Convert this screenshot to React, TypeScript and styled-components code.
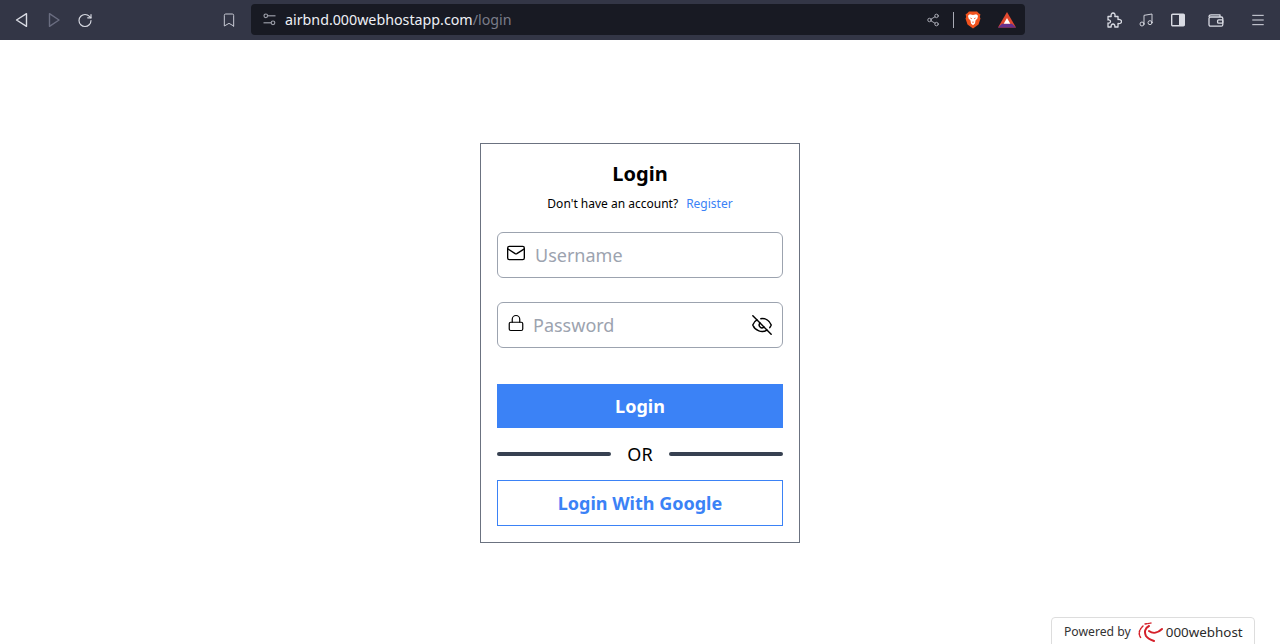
import * as React from 'react';
import styled, { createGlobalStyle } from 'styled-components';
import { Bookmark, EyeOff, Lock, Mail, Menu, Music, RotateCw, Share2 } from 'lucide-react';

const GlobalStyle = createGlobalStyle`
  html, body {
    margin: 0;
    height: 100%;
    overflow: hidden;
    background: #ffffff;
    font-family: 'Noto Sans', 'Open Sans', sans-serif;
  }
`;
const Page = styled.div`
  display: flex;
  flex-direction: column;
  height: 644px;
`;
const Toolbar = styled.header`
  display: flex;
  align-items: center;
  height: 40px;
  flex-shrink: 0;
  background-color: #333646;
  color: #d9dbe3;
`;
const NavGroup = styled.div`
  display: flex;
  align-items: center;
  width: 220px;
  padding-left: 13px;
  gap: 16px;
  box-sizing: border-box;
`;
const ToolButton = styled.span<{ $dim?: boolean }>`
  display: flex;
  align-items: center;
  justify-content: center;
  width: 16px;
  height: 16px;
  color: ${(p) => (p.$dim ? '#6a6d80' : '#d9dbe3')};
`;
const BookmarkSlot = styled.span`
  display: flex;
  width: 31px;
  padding-left: 1px;
  box-sizing: border-box;
  color: #c6c8d2;
`;
const AddressBar = styled.div`
  display: flex;
  align-items: center;
  width: 774px;
  height: 31px;
  margin-top: -1px;
  padding: 0 9px 0 12px;
  box-sizing: border-box;
  background-color: #181a23;
  border-radius: 4px;
`;
const Url = styled.div`
  flex: 1;
  margin: -1px 0 0 9px;
  font-size: 14.25px;
  color: #eef0f6;
`;
const UrlPath = styled.span`
  color: #7a7c88;
`;
const ShareSlot = styled.span`
  display: flex;
  margin-right: 3px;
`;
const Divider = styled.span`
  width: 1px;
  height: 16px;
  margin: 0 11px 0 10px;
  background-color: #a9abb5;
`;
const BraveGap = styled.span`
  width: 17px;
`;
const RightTools = styled.div`
  display: flex;
  align-items: center;
  margin-left: 81px;
  color: #d9dbe3;
`;
const RightSlot = styled.span<{ $gap: number }>`
  display: flex;
  justify-content: center;
  width: 16px;
  margin-right: ${(p) => p.$gap}px;
`;
const Main = styled.main`
  flex: 1;
  display: flex;
  justify-content: center;
  padding-top: 103px;
`;
const Card = styled.form`
  display: flex;
  flex-direction: column;
  width: 320px;
  height: 400px;
  padding: 16px;
  box-sizing: border-box;
  border: 1px solid #6b7280;
`;
const Title = styled.h1`
  margin: 0;
  height: 28px;
  font-size: 20px;
  line-height: 28px;
  font-weight: 700;
  text-align: center;
  color: #000000;
`;
const SubTitle = styled.p`
  margin: 8px 0 20px;
  height: 16px;
  font-size: 12px;
  line-height: 16px;
  text-align: center;
  color: #000000;
`;
const RegisterLink = styled.a`
  margin-left: 8px;
  color: #3b82f6;
`;
const Field = styled.div<{ $offset: number }>`
  display: flex;
  align-items: center;
  height: 46px;
  margin-bottom: 24px;
  padding: 0 9px 0 ${(p) => p.$offset}px;
  box-sizing: border-box;
  border: 1px solid #9ca3af;
  border-radius: 6px;
  color: #000000;
`;
const FieldIcon = styled.span<{ $gap: number }>`
  display: flex;
  margin: -5px ${(p) => p.$gap}px 0 0;
`;
const Placeholder = styled.span`
  flex: 1;
  font-size: 18px;
  color: #9ca3af;
`;
const PrimaryButton = styled.button`
  height: 44px;
  margin-top: 12px;
  padding: 0;
  border: none;
  background-color: #3b82f6;
  color: #ffffff;
  font-family: inherit;
  font-size: 18px;
  font-weight: 700;
`;
const OrRow = styled.div`
  display: flex;
  align-items: center;
  justify-content: space-between;
  height: 52px;
  font-size: 18px;
  color: #000000;
`;
const OrLine = styled.span`
  width: 114px;
  height: 4px;
  border-radius: 2px;
  background-color: #374151;
`;
const GoogleButton = styled.button`
  height: 46px;
  padding: 0;
  border: 1px solid #3b82f6;
  background-color: #ffffff;
  color: #3b82f6;
  font-family: inherit;
  font-size: 18px;
  font-weight: 700;
`;
const Badge = styled.div`
  position: fixed;
  right: 25px;
  bottom: -2px;
  display: flex;
  align-items: center;
  width: 204px;
  height: 29px;
  padding-left: 12px;
  box-sizing: border-box;
  background: #ffffff;
  border: 1px solid #dddddd;
  border-radius: 4px 4px 0 0;
  font-size: 12.2px;
  color: #333333;
`;
const BadgeLogo = styled.span`
  display: flex;
  margin: 0 3px 0 6px;
`;
const BadgeBrand = styled.span`
  font-size: 13.4px;
  color: #2b2b2b;
`;

const BackIcon = ({ flip }: { flip?: boolean }) => (
  <svg width="16" height="16" viewBox="0 0 16 16" fill="none" stroke="currentColor" strokeWidth="1.4" strokeLinejoin="round">
    <path d={flip ? 'M4.5 1.7 L14 8 L4.5 14.3 Z' : 'M13.5 1.7 L3.5 8 L13.5 14.3 Z'} />
  </svg>
);
const SiteSettingsIcon = () => (
  <svg width="13" height="13" viewBox="0 0 13 13" fill="none" stroke="#9a9ca6" strokeWidth="1.2">
    <circle cx="2.8" cy="2.8" r="1.8" />
    <path d="M4.8 2.8 H12.5" />
    <circle cx="10" cy="9.8" r="1.8" />
    <path d="M0.5 9.8 H8" />
  </svg>
);
const PuzzleIcon = () => (
  <svg width="16" height="16" viewBox="0 0 16 16" fill="none" stroke="currentColor" strokeWidth="1.3" strokeLinejoin="round">
    <path d="M2 4.5 H5.2 C4.6 2 6 1 7 1 C8.5 1 9.5 2.3 8.8 4.5 H12 V7.5 C14.5 7 15.5 8.5 15.5 9.5 C15.5 11 14 12 12 11.5 V15 H8.8 C9.2 13 8 12 7 12 C6 12 4.8 13 5.2 15 H2 V11 C3.5 11.5 4.5 10.5 4.5 9.5 C4.5 8.5 3.5 7.5 2 8 Z" />
  </svg>
);
const PanelIcon = () => (
  <svg width="16" height="16" viewBox="0 0 16 16">
    <rect x="1.7" y="2.2" width="12.6" height="11.6" rx="1" fill="none" stroke="currentColor" strokeWidth="1.4" />
    <rect x="9" y="2.2" width="5.3" height="11.6" fill="currentColor" />
  </svg>
);
const WalletIcon = () => (
  <svg width="16" height="16" viewBox="0 0 16 16" fill="none" stroke="currentColor" strokeWidth="1.3" strokeLinejoin="round">
    <path d="M1 5 C1 3.5 2 2.8 3 2.8 H12 V5" />
    <rect x="1" y="5" width="13.8" height="9.2" rx="1.5" />
    <rect x="9.6" y="7.8" width="5.2" height="3.4" rx="1" />
  </svg>
);
const BraveIcon = () => (
  <svg width="16" height="18" viewBox="0 0 16 18">
    <path d="M4 .5 L12 .5 L14 2.5 L15.4 3.2 L14.8 6 L15.5 7.5 L13.5 13.5 L8 17.5 L2.5 13.5 L.5 7.5 L1.2 6 L.6 3.2 L2 2.5 Z" fill="#f1531e" />
    <path d="M4.8 3.2 L8 4 L11.2 3.2 L13 4.8 L12.4 7.5 L10.5 9.5 L10 12.5 L8 14.2 L6 12.5 L5.5 9.5 L3.6 7.5 L3 4.8 Z" fill="#ffffff" />
    <path d="M4.6 6.4 L7 7.2 L6.6 8.2 Z M11.4 6.4 L9 7.2 L9.4 8.2 Z M6.8 10.8 L9.2 10.8 L8 12 Z" fill="#f1531e" />
  </svg>
);
const BatIcon = () => (
  <svg width="18" height="16" viewBox="0 0 18 16">
    <path d="M9 0 L18 15.5 L0 15.5 Z" fill="#e2492f" />
    <path d="M4 11.8 L14 11.8 L18 15.5 L0 15.5 Z" fill="#66308f" />
    <path d="M9 6 L12.3 11.8 L5.7 11.8 Z" fill="#ffffff" />
  </svg>
);
const HostLogo = () => (
  <svg width="26" height="20" viewBox="0 0 26 20" fill="none" stroke="#d5202a" strokeLinecap="round">
    <path d="M6 4 C2 8 1 12 4 16" strokeWidth="1.5" strokeDasharray="1.6 1.2" />
    <path d="M8 2 L14 1" strokeWidth="1.3" strokeDasharray="1.6 1.2" />
    <path d="M12 4 C8 6 7 10 9 14 C11 17 14 18 17 19" strokeWidth="2" />
    <path d="M12 9 C16 12 21 11 25 7" strokeWidth="2" />
  </svg>
);

const App = () => (
  <Page>
    <GlobalStyle />
    <Toolbar>
      <NavGroup>
        <ToolButton><BackIcon /></ToolButton>
        <ToolButton $dim><BackIcon flip /></ToolButton>
        <ToolButton><RotateCw size={17} strokeWidth={1.7} /></ToolButton>
      </NavGroup>
      <BookmarkSlot><Bookmark size={16} strokeWidth={1.5} /></BookmarkSlot>
      <AddressBar>
        <SiteSettingsIcon />
        <Url>airbnd.000webhostapp.com<UrlPath>/login</UrlPath></Url>
        <ShareSlot><Share2 size={14} strokeWidth={1.4} color="#c0c2cb" /></ShareSlot>
        <Divider />
        <BraveIcon />
        <BraveGap />
        <BatIcon />
      </AddressBar>
      <RightTools>
        <RightSlot $gap={16}><PuzzleIcon /></RightSlot>
        <RightSlot $gap={16}><Music size={16} strokeWidth={1.4} /></RightSlot>
        <RightSlot $gap={22}><PanelIcon /></RightSlot>
        <RightSlot $gap={26}><WalletIcon /></RightSlot>
        <RightSlot $gap={0}><Menu size={18} strokeWidth={1.5} /></RightSlot>
      </RightTools>
    </Toolbar>
    <Main>
      <Card>
        <Title>Login</Title>
        <SubTitle>
          Don't have an account?<RegisterLink>Register</RegisterLink>
        </SubTitle>
        <Field $offset={8}>
          <FieldIcon $gap={9}><Mail size={20} strokeWidth={1.6} /></FieldIcon>
          <Placeholder>Username</Placeholder>
        </Field>
        <Field $offset={9}>
          <FieldIcon $gap={8}><Lock size={18} strokeWidth={1.6} /></FieldIcon>
          <Placeholder>Password</Placeholder>
          <EyeOff size={22} strokeWidth={1.6} />
        </Field>
        <PrimaryButton type="button">Login</PrimaryButton>
        <OrRow>
          <OrLine />
          OR
          <OrLine />
        </OrRow>
        <GoogleButton type="button">Login With Google</GoogleButton>
      </Card>
    </Main>
    <Badge>
      Powered by<BadgeLogo><HostLogo /></BadgeLogo><BadgeBrand>000webhost</BadgeBrand>
    </Badge>
  </Page>
);

export default App;
